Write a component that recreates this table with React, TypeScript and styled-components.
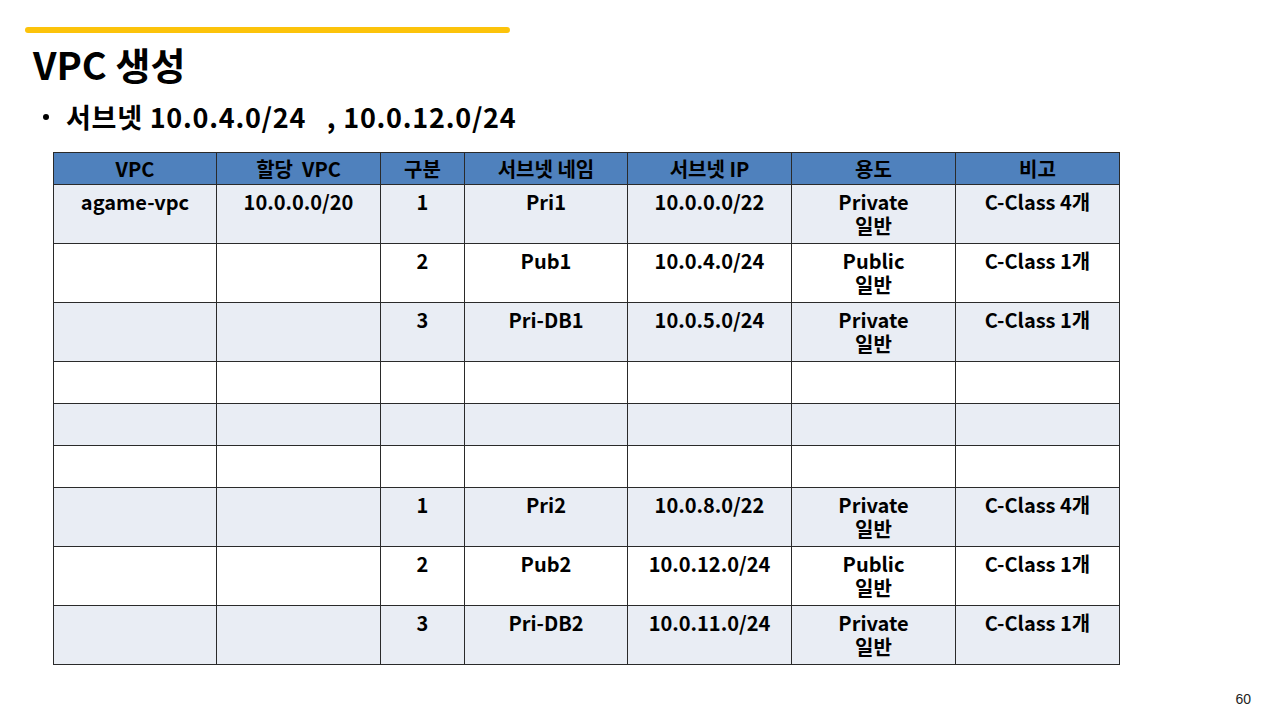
import React from "react";
import styled, { createGlobalStyle } from "styled-components";

const Global = createGlobalStyle`
  html, body { margin: 0; padding: 0; background: #fff; }
  body { font-family: "Noto Sans CJK KR", "Noto Sans", sans-serif; color: #000; }
`;

const Slide = styled.div`
  position: relative;
  width: 1280px;
  height: 720px;
  overflow: hidden;
  box-sizing: border-box;
  padding: 27px 0 0 25px;
`;

const AccentBar = styled.div`
  width: 485px;
  height: 6px;
  border-radius: 3px;
  background: #fcc30b;
`;

const Title = styled.h1`
  margin: 6px 0 0 8px;
  font-size: 38px;
  line-height: 50px;
  font-weight: 700;
`;

const Bullet = styled.div`
  display: flex;
  align-items: center;
  gap: 17px;
  margin: 10px 0 0 18px;
  font-size: 27px;
  line-height: 36px;
  font-weight: 700;
  letter-spacing: 0.75px;
  &::before {
    content: "";
    width: 6px;
    height: 6px;
    border-radius: 50%;
    background: #000;
  }
`;

const Table = styled.table`
  margin: 17px 0 0 28px;
  border-collapse: collapse;
  table-layout: fixed;
  width: 1066px;
  font-size: 20px;
  font-weight: 700;
  line-height: 24px;
`;

const Head = styled.th`
  background: #4f81bd;
  border: 1px solid #2a2a2a;
  height: 31px;
  padding: 0;
  font-weight: 700;
  text-align: center;
  vertical-align: middle;
`;

const Row = styled.tr<{ shade: boolean; tall: boolean }>`
  background: ${({ shade }) => (shade ? "#e9edf4" : "#ffffff")};
  height: ${({ tall }) => (tall ? "59px" : "42px")};
`;

const Cell = styled.td`
  border: 1px solid #2a2a2a;
  padding: 5px 2px 0;
  text-align: center;
  vertical-align: top;
`;

const CellLine = styled.div`
  height: 24px;
  overflow: visible;
`;

const PageNum = styled.div`
  position: absolute;
  right: 29px;
  bottom: 13px;
  font-family: "Liberation Sans", Arial, sans-serif;
  font-size: 14px;
  color: #222;
`;

const widths = [163, 164, 84, 163, 164, 164, 164];
const headers = ["VPC", "할당\u00a0\u00a0VPC", "구분", "서브넷 네임", "서브넷 IP", "용도", "비고"];

type RowData = string[] | null;
const rows: RowData[] = [
  ["agame-vpc", "10.0.0.0/20", "1", "Pri1", "10.0.0.0/22", "Private\n일반", "C-Class 4개"],
  ["", "", "2", "Pub1", "10.0.4.0/24", "Public\n일반", "C-Class 1개"],
  ["", "", "3", "Pri-DB1", "10.0.5.0/24", "Private\n일반", "C-Class 1개"],
  null,
  null,
  null,
  ["", "", "1", "Pri2", "10.0.8.0/22", "Private\n일반", "C-Class 4개"],
  ["", "", "2", "Pub2", "10.0.12.0/24", "Public\n일반", "C-Class 1개"],
  ["", "", "3", "Pri-DB2", "10.0.11.0/24", "Private\n일반", "C-Class 1개"],
];

const Lines = ({ text }: { text: string }) => (
  <>
    {text
      .split("\n")
      .filter((t) => t !== "")
      .map((t, i) => (
        <CellLine key={i}>{t}</CellLine>
      ))}
  </>
);

export default function App() {
  return (
    <Slide>
      <Global />
      <AccentBar />
      <Title>VPC 생성</Title>
      <Bullet>서브넷 10.0.4.0/24&nbsp;&nbsp;&nbsp;, 10.0.12.0/24</Bullet>
      <Table>
        <colgroup>
          {widths.map((w, i) => (
            <col key={i} style={{ width: w }} />
          ))}
        </colgroup>
        <thead>
          <tr>
            {headers.map((h) => (
              <Head key={h}>{h}</Head>
            ))}
          </tr>
        </thead>
        <tbody>
          {rows.map((r, i) => (
            <Row key={i} shade={i % 2 === 0} tall={r !== null}>
              {(r ?? ["", "", "", "", "", "", ""]).map((c, j) => (
                <Cell key={j}>
                  <Lines text={c} />
                </Cell>
              ))}
            </Row>
          ))}
        </tbody>
      </Table>
      <PageNum>60</PageNum>
    </Slide>
  );
}
